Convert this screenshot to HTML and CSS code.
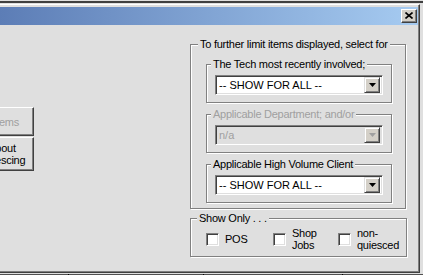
FILE: index.html
```html
<!DOCTYPE html>
<html lang="en">
<head>
<meta charset="UTF-8">
<title>Filter Items</title>
<link rel="stylesheet" href="styles.css">
</head>
<body>
<div class="topline"></div>
<div class="window">
<div class="frame">
    <div class="titlebar">
        <span class="close-btn">
            <svg width="8" height="7" viewBox="0 0 8 7"><path d="M0.5 0.5 L7.5 6.5 M7.5 0.5 L0.5 6.5" stroke="#000" stroke-width="1.6"/></svg>
        </span>
    </div>
    <div class="content">
        <div class="side-buttons">
            <div class="btn disabled">All Items</div>
            <div class="btn tall">About<br>Quiescing</div>
        </div>
        <div class="filters">
            <fieldset class="group outer">
                <legend>To further limit items displayed, select for</legend>
                <div class="outer-body">
                    <fieldset class="group inner">
                        <legend>The Tech most recently involved;</legend>
                        <div class="combo">
                            <span class="combo-text">-- SHOW FOR ALL --</span>
                            <span class="drop"><svg width="7" height="4" viewBox="0 0 7 4"><path d="M0 0 H7 L3.5 4 Z" fill="#000"/></svg></span>
                        </div>
                    </fieldset>
                    <fieldset class="group inner off">
                        <legend>Applicable Department; and/or</legend>
                        <div class="combo">
                            <span class="combo-text">n/a</span>
                            <span class="drop"><svg width="7" height="4" viewBox="0 0 7 4"><path d="M0 0 H7 L3.5 4 Z" fill="#a0a0a0"/></svg></span>
                        </div>
                    </fieldset>
                    <fieldset class="group inner">
                        <legend>Applicable High Volume Client</legend>
                        <div class="combo">
                            <span class="combo-text">-- SHOW FOR ALL --</span>
                            <span class="drop"><svg width="7" height="4" viewBox="0 0 7 4"><path d="M0 0 H7 L3.5 4 Z" fill="#000"/></svg></span>
                        </div>
                    </fieldset>
                </div>
            </fieldset>
            <fieldset class="group show-only">
                <legend>Show Only . . .</legend>
                <div class="checks">
                    <label class="check w1"><span class="box"></span><span>POS</span></label>
                    <label class="check w2"><span class="box"></span><span>Shop<br>Jobs</span></label>
                    <label class="check"><span class="box"></span><span>non-<br>quiesced</span></label>
                </div>
            </fieldset>
        </div>
    </div>
</div>
</div>
<div class="under">
    <span class="tick t1"></span>
    <span class="tick t2"></span>
    <span class="tick t3"></span>
</div>
</body>
</html>
```

FILE: styles.css
```css
body {
    margin: 0;
    width: 423px;
    height: 275px;
    overflow: hidden;
    background-color: #dfdfdf;
    font-family: "Liberation Sans", Arial, sans-serif;
    font-size: 11px;
    letter-spacing: -0.25px;
    color: #000;
}
.topline {
    margin-top: 1px;
    height: 2px;
    background-color: #404040;
}
.window {
    margin-top: 1px;
    width: 420px;
    height: 269px;
    box-sizing: border-box;
    border-top: 1px solid #fff;
    border-right: 1px solid #404040;
    border-bottom: 1px solid #404040;
}
.frame {
    height: 267px;
    box-sizing: border-box;
    padding-top: 2px;
    border-right: 1px solid #808080;
    border-bottom: 1px solid #808080;
    display: flex;
    flex-direction: column;
}
.titlebar {
    height: 18px;
    background: linear-gradient(to right, #5c7db6, #a6cbf1);
    display: flex;
    align-items: center;
    justify-content: flex-end;
    padding-right: 1px;
}
.close-btn {
    width: 16px;
    height: 14px;
    box-sizing: border-box;
    background-color: #d4d0c8;
    border: 1px solid;
    border-color: #fff #404040 #404040 #fff;
    box-shadow: inset -1px -1px #808080;
    display: flex;
    align-items: center;
    justify-content: center;
}
.close-btn svg {
    display: block;
    margin: 0 1px 1px 0;
}
.content {
    display: flex;
}
.side-buttons {
    width: 64px;
    margin-left: -30px;
    padding-top: 82px;
    display: flex;
    flex-direction: column;
    gap: 1px;
}
.btn {
    height: 29px;
    box-sizing: border-box;
    border: 1px solid;
    border-color: #fff #404040 #404040 #fff;
    box-shadow: inset -1px -1px #808080;
    display: flex;
    align-items: center;
    justify-content: center;
    text-align: center;
    line-height: 12px;
}
.btn.tall {
    height: 34px;
}
.btn.disabled {
    color: #a0a0a0;
    padding-right: 6px;
}
.filters {
    margin-left: 156px;
    padding-top: 13px;
}
.group {
    margin: 0;
    padding: 0;
    min-width: 0;
    box-sizing: border-box;
    border: 1px solid #808080;
    box-shadow: 1px 1px #fff, inset 1px 1px #fff;
}
.group legend {
    padding: 0 2px;
    line-height: 13px;
    background-color: #dfdfdf;
}
.outer {
    width: 216px;
}
.outer > legend {
    margin-left: 7px;
}
.outer-body {
    padding: 7px 13px 5px 15px;
}
.inner {
    width: 186px;
    margin-top: 5px;
}
.inner:first-child {
    margin-top: 0;
}
.inner > legend {
    margin-left: 4px;
}
.inner .combo {
    margin: 4px 0 7px 8px;
}
.off legend {
    color: #a0a0a0;
}
.combo {
    width: 168px;
    height: 20px;
    box-sizing: border-box;
    background-color: #fff;
    border: 1px solid;
    border-color: #808080 #fff #fff #808080;
    box-shadow: inset 1px 1px #404040, inset -1px -1px #dfdfdf;
    padding: 2px;
    display: flex;
    align-items: center;
}
.combo-text {
    flex: 1;
    padding-left: 1px;
    letter-spacing: 0;
}
.off .combo {
    background-color: #dfdfdf;
    color: #a0a0a0;
}
.drop {
    width: 16px;
    height: 16px;
    box-sizing: border-box;
    background-color: #d4d0c8;
    border: 1px solid;
    border-color: #dfdfdf #404040 #404040 #dfdfdf;
    box-shadow: inset 1px 1px #fff, inset -1px -1px #808080;
    display: flex;
    align-items: center;
    justify-content: center;
}
.drop svg {
    display: block;
}
.show-only {
    width: 217px;
    margin-top: 3px;
}
.show-only > legend {
    margin-left: 6px;
}
.checks {
    display: flex;
    align-items: center;
    padding: 2px 0 5px 15px;
}
.check {
    display: flex;
    align-items: center;
    line-height: 12px;
}
.check.w1 {
    width: 67px;
}
.check.w2 {
    width: 65px;
}
.box {
    width: 13px;
    height: 13px;
    box-sizing: border-box;
    margin-right: 6px;
    background-color: #fff;
    border: 1px solid;
    border-color: #808080 #fff #fff #808080;
    box-shadow: inset 1px 1px #404040, inset -1px -1px #dfdfdf;
}
.under {
    margin-top: 1px;
    height: 2px;
    background-color: #505050;
    display: flex;
}
.tick {
    width: 1px;
    height: 2px;
    background-color: #000;
}
.t1 { margin-left: 68px; }
.t2 { margin-left: 134px; }
.t3 { margin-left: 138px; }
```
